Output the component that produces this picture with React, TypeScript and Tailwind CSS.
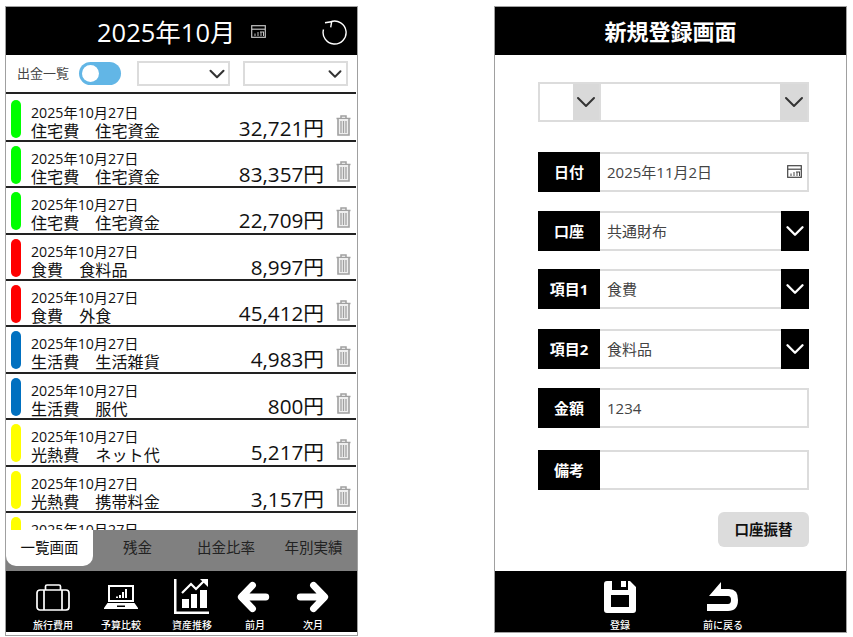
import React from 'react';
import { ChevronDown } from 'lucide-react';

const FONT = { fontFamily: '"Open Sans", "Noto Sans CJK JP", sans-serif' };

// Small calendar glyph used next to date fields.
const CalendarIcon = ({ className }: { className: string }) => (
  <svg viewBox="0 0 15 13" className={className} fill="none" stroke="currentColor">
    <rect x="0.7" y="0.7" width="13.6" height="11.6" strokeWidth="1.2" />
    <path d="M1 4.2H14" strokeWidth="1.2" />
    <path d="M4 11V8.5M7 11V7M10 11V7M12.5 11V7M9 7H13" strokeWidth="1" />
  </svg>
);

const TrashIcon = () => (
  <svg viewBox="0 0 15 21" className="w-[15px] h-[21px] text-[#a0a0a0]" fill="none" stroke="currentColor">
    <path d="M0.5 3.5H14.5M5 3V1H10V3" strokeWidth="1.5" />
    <path d="M2 4V20H13V4" strokeWidth="1.6" fill="#efefef" />
    <path d="M5 6V18M7.5 6V18M10 6V18" strokeWidth="1.3" />
  </svg>
);

const NavButton = ({ label, icon, width }: { label: string; icon: React.ReactNode; width: string }) => (
  <div className={`flex flex-col items-center ${width}`}>
    <div className="h-[38px] flex items-center justify-center">{icon}</div>
    <span className="mt-[2px] text-[10px] leading-[14px] font-medium text-white whitespace-nowrap">{label}</span>
  </div>
);

const rows = [
  { color: 'bg-[#00ff00]', cat: '住宅費　住宅資金', amount: '32,721円' },
  { color: 'bg-[#00ff00]', cat: '住宅費　住宅資金', amount: '83,357円' },
  { color: 'bg-[#00ff00]', cat: '住宅費　住宅資金', amount: '22,709円' },
  { color: 'bg-[#ff0000]', cat: '食費　食料品', amount: '8,997円' },
  { color: 'bg-[#ff0000]', cat: '食費　外食', amount: '45,412円' },
  { color: 'bg-[#0070c0]', cat: '生活費　生活雑貨', amount: '4,983円' },
  { color: 'bg-[#0070c0]', cat: '生活費　服代', amount: '800円' },
  { color: 'bg-[#ffff00]', cat: '光熱費　ネット代', amount: '5,217円' },
  { color: 'bg-[#ffff00]', cat: '光熱費　携帯料金', amount: '3,157円' },
  { color: 'bg-[#ffff00]', cat: '', amount: '' },
];

const ListScreen = () => (
  <div className="w-[353px] h-[630px] border border-[#a0a0a0] flex flex-col bg-white shrink-0">
    <div className="h-[48px] bg-black text-white flex items-center relative shrink-0">
      <span className="ml-[91px] mt-[2px] text-[25.5px] leading-[48px] whitespace-nowrap">2025年10月</span>
      <CalendarIcon className="ml-[16px] w-[15px] h-[13px] text-[#c4c4c4]" />
      <svg viewBox="0 0 26 28" className="absolute left-[316px] top-[10px] w-[26px] h-[28px]" fill="none" stroke="white" strokeWidth="1.4">
        <path d="M9 4.6A11.5 11.5 0 1 1 1.5 12.5" />
        <path d="M3 5.7L9.7 4.7L8.7 10.3" />
      </svg>
    </div>

    <div className="h-[37px] flex items-center shrink-0">
      <span className="ml-[11px] text-[13px] text-[#444] w-[62px] whitespace-nowrap">出金一覧</span>
      <div className="w-[42px] h-[23px] rounded-full bg-[#62b6e6] flex items-center pl-[3px]">
        <div className="w-[17px] h-[17px] rounded-full bg-white" />
      </div>
      <div className="ml-[16px] w-[93px] h-[25px] border-2 border-[#dcdcdc] flex items-center justify-end">
        <ChevronDown size={26} strokeWidth={1.9} className="text-[#333] shrink-0 mr-[-2px]" />
      </div>
      <div className="ml-[13px] w-[105px] h-[25px] border-2 border-[#dcdcdc] flex items-center justify-end">
        <ChevronDown size={22} strokeWidth={2.1} className="text-[#333] shrink-0" />
      </div>
    </div>

    <div className="h-[438px] overflow-hidden shrink-0">
      <div className="h-[2px] bg-[#222] mr-[1px] mb-[1.5px]" />
      {rows.map((row, i) => (
        <div key={i} className="h-[46.4px] flex mr-[1px] border-b-2 border-[#222] relative">
          <div className={`w-[10px] h-[38px] ml-[5px] mt-[4px] rounded-[5px] ${row.color}`} />
          <div className="ml-[10px] mt-[8px] text-[#111]">
            <div className="text-[14.2px] leading-[18px] whitespace-nowrap">2025年10月27日</div>
            <div className="text-[16.1px] leading-[19px] whitespace-nowrap">{row.cat}</div>
          </div>
          <div className="absolute right-[32px] top-[18px] text-[20.7px] leading-[28px] text-[#111] whitespace-nowrap">{row.amount}</div>
          {row.amount && (
            <div className="absolute left-[330px] top-[19px]">
              <TrashIcon />
            </div>
          )}
        </div>
      ))}
    </div>

    <div className="h-[41px] bg-[#808080] flex shrink-0 text-[14.5px] text-[#222]">
      <div className="w-[87px] h-[36px] bg-white rounded-b-[10px] flex items-center justify-center text-[#111]">一覧画面</div>
      <div className="w-[89px] h-[36px] flex items-center justify-center">残金</div>
      <div className="w-[88px] h-[36px] flex items-center justify-center">出金比率</div>
      <div className="w-[87px] h-[36px] flex items-center justify-center">年別実績</div>
    </div>

    <div className="h-[61px] bg-black flex items-start pt-[7px] pl-[20px] shrink-0">
      <NavButton
        width="w-[54px]"
        label="旅行費用"
        icon={
          <svg viewBox="0 0 34 27" className="w-[34px] h-[27px]" fill="none" stroke="white" strokeWidth="1.7">
            <rect x="1" y="6" width="32" height="20" rx="3" />
            <path d="M9.5 6V2.5Q9.5 1 11 1H23Q24.5 1 24.5 2.5V6M8 6V26M26 6V26" />
          </svg>
        }
      />
      <NavButton
        width="w-[54px] ml-[14px]"
        label="予算比較"
        icon={
          <svg viewBox="0 0 34 24" className="w-[34px] h-[24px]" fill="white">
            <path fillRule="evenodd" d="M4 0H30V17H4ZM6 2V15H28V2Z" />
            <path d="M12 13H14V11.5H12ZM15 13H17V10H15ZM18 13H20V7H18ZM21 13H23V4H21Z" />
            <path fillRule="evenodd" d="M3.5 18H30.5L34 23V24H0V23ZM13 20.5V22H21V20.5Z" />
          </svg>
        }
      />
      <NavButton
        width="w-[54px] ml-[17px]"
        label="資産推移"
        icon={
          <svg viewBox="0 0 36 35" className="w-[36px] h-[35px] mt-[-1px]" fill="white">
            <path d="M0 0H2.5V32.5H35V35H0Z" />
            <path d="M8 20H15V29H8ZM17 15H23V29H17ZM26 11H33V29H26Z" />
            <path d="M8 14L17 5L22 10L30 2" fill="none" stroke="white" strokeWidth="2.2" />
            <path d="M26 0H34V8Z" />
          </svg>
        }
      />
      <NavButton
        width="w-[54px] ml-[9px]"
        label="前月"
        icon={
          <svg viewBox="0 0 32 32" className="w-[34px] h-[34px] ml-[-4px]" fill="none" stroke="white" strokeWidth="6.5" strokeLinecap="round" strokeLinejoin="round">
            <path d="M28 16H6M15.5 5L5 16L15.5 27" />
          </svg>
        }
      />
      <NavButton
        width="w-[54px] ml-[4px]"
        label="次月"
        icon={
          <svg viewBox="0 0 32 32" className="w-[34px] h-[34px]" fill="none" stroke="white" strokeWidth="6.5" strokeLinecap="round" strokeLinejoin="round">
            <path d="M4 16H26M16.5 5L27 16L16.5 27" />
          </svg>
        }
      />
    </div>
  </div>
);

const FormRow = ({ label, value, select, date, top }: { label: string; value?: string; select?: boolean; date?: boolean; top: string }) => (
  <div className={`ml-[43px] w-[271px] h-[40px] flex ${top}`}>
    <div className="w-[62px] bg-black text-white text-[15px] font-bold flex items-center justify-center shrink-0">{label}</div>
    <div className="flex-1 border-2 border-l-0 border-[#dcdcdc] flex items-center pl-[7px] text-[15px] text-[#444] relative">
      {value}
      {date && <CalendarIcon className="absolute right-[5px] top-[11px] w-[15px] h-[13px] text-[#444]" />}
      {select && (
        <div className="absolute right-[-2px] top-[-2px] bottom-[-2px] w-[28px] bg-black flex items-center justify-center overflow-hidden">
          <ChevronDown size={30} strokeWidth={1.9} className="text-white shrink-0" />
        </div>
      )}
    </div>
  </div>
);

const RegisterScreen = () => (
  <div className="w-[353px] h-[627px] ml-[136px] border border-[#a0a0a0] flex flex-col bg-white shrink-0">
    <div className="h-[48px] bg-black text-white text-[22px] font-bold flex items-center justify-center shrink-0">新規登録画面</div>

    <div className="flex-1">
      <div className="ml-[43px] mt-[27px] w-[271px] h-[40px] flex border-2 border-[#dcdcdc]">
        <div className="w-[61px] flex justify-end border-r-2 border-[#dcdcdc]">
          <div className="w-[26px] bg-[#d9d9d9] flex items-center justify-center overflow-hidden">
            <ChevronDown size={32} strokeWidth={1.5} className="text-[#333] shrink-0" />
          </div>
        </div>
        <div className="flex-1 flex justify-end">
          <div className="w-[27px] bg-[#d9d9d9] flex items-center justify-center overflow-hidden">
            <ChevronDown size={32} strokeWidth={1.5} className="text-[#333] shrink-0" />
          </div>
        </div>
      </div>
      <FormRow top="mt-[30px]" label="日付" value="2025年11月2日" date />
      <FormRow top="mt-[19px]" label="口座" value="共通財布" select />
      <FormRow top="mt-[18px]" label="項目1" value="食費" select />
      <FormRow top="mt-[20px]" label="項目2" value="食料品" select />
      <FormRow top="mt-[19px]" label="金額" value="1234" />
      <FormRow top="mt-[22px]" label="備考" />
      <div className="ml-[223px] mt-[22px] w-[91px] h-[35px] bg-[#dcdcdc] rounded-[6px] text-[14.5px] font-bold text-[#111] flex items-center justify-center">口座振替</div>
    </div>

    <div className="h-[61px] bg-black flex items-start pt-[7px] shrink-0">
      <div className="ml-[90px]">
        <NavButton
          width="w-[70px]"
          label="登録"
          icon={
            <svg viewBox="0 0 32 32" className="w-[32px] h-[32px]" fill="white">
              <path fillRule="evenodd" d="M3 0H8V9H24V0H26L32 6V29Q32 32 29 32H3Q0 32 0 29V3Q0 0 3 0ZM7 14V26H25V14Z" />
              <path d="M17 0H22V6H17Z" />
            </svg>
          }
        />
      </div>
      <div className="ml-[33px]">
        <NavButton
          width="w-[70px]"
          label="前に戻る"
          icon={
            <svg viewBox="0 0 32 30" className="w-[32px] h-[30px]" fill="white">
              <path d="M14 0V7H22Q31 7 31 18Q31 29 21 29H0V22H21Q24 22 24 18Q24 14 21 14H2Z" />
            </svg>
          }
        />
      </div>
    </div>
  </div>
);

export default function App() {
  return (
    <div style={FONT} className="w-[853px] h-[637px] bg-white overflow-hidden flex items-start pt-[6px] pl-[5px]">
      <ListScreen />
      <RegisterScreen />
    </div>
  );
}
